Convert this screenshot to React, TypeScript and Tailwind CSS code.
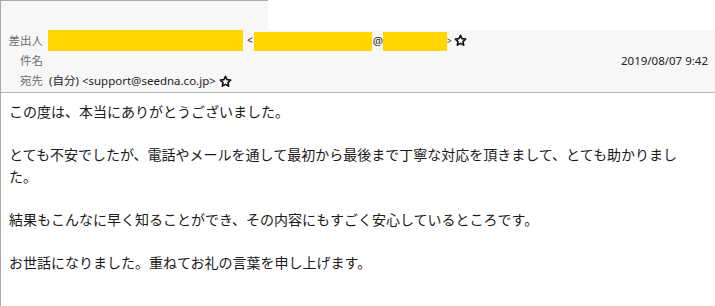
import React from 'react';

const StarIcon: React.FC = () => (
  <svg width="13" height="13" viewBox="0 0 24 24" fill="none" stroke="#111" strokeWidth={3} strokeLinejoin="round">
    <path d="M12 2.5l2.9 6.1 6.6.8-4.9 4.6 1.3 6.6L12 17.3l-5.9 3.3 1.3-6.6-4.9-4.6 6.6-.8z" />
  </svg>
);

const headerFont = { fontFamily: '"Noto Sans", "Noto Sans CJK JP", sans-serif' };

const App: React.FC = () => {
  const paragraphs = [
    'この度は、本当にありがとうございました。',
    'とても不安でしたが、電話やメールを通して最初から最後まで丁寧な対応を頂きまして、とても助かりました。',
    '結果もこんなに早く知ることができ、その内容にもすごく安心しているところです。',
    'お世話になりました。重ねてお礼の言葉を申し上げます。',
  ];

  return (
    <div className="w-[715px] h-[306px] bg-white border-l border-[#a8a8a8] overflow-hidden">
      {/* top strip */}
      <div className="flex h-[30px]">
        <div className="w-[267px] bg-[#f7f7f7] border-t border-[#a9aab8]" />
        <div className="flex-1 bg-white" />
      </div>

      {/* header */}
      <div className="bg-[#f7f7f7] border-b border-[#b4b4b4] pb-px text-[11.5px] text-[#222]" style={headerFont}>
        <div className="flex items-center h-[21px]">
          <div className="w-[42px] text-right text-[#6b6b6b] shrink-0">差出人</div>
          <div className="ml-[5px] w-[195px] h-[21px] bg-[#ffd600]" />
          <span className="ml-[4px] text-[10px]">&lt;</span>
          <div className="ml-[1px] w-[118px] h-[19px] bg-[#ffd600] self-end" />
          <span className="ml-[1px]">@</span>
          <div className="w-[64px] h-[19px] bg-[#ffd600] self-end" />
          <span className="text-[8px]">&gt;</span>
          <span className="ml-[2px] flex"><StarIcon /></span>
        </div>
        <div className="flex items-center h-[20px]">
          <div className="w-[42px] text-right text-[#6b6b6b] shrink-0">件名</div>
          <div className="flex-1" />
          <div className="pr-[7px]">2019/08/07 9:42</div>
        </div>
        <div className="flex items-center h-[20px]">
          <div className="w-[42px] text-right text-[#6b6b6b] shrink-0">宛先</div>
          <div className="ml-[6px]">(自分) &lt;support@seedna.co.jp&gt;</div>
          <span className="ml-[3px] flex"><StarIcon /></span>
        </div>
      </div>

      {/* body */}
      <div
        className="pl-[8px] pr-[25px] pt-[8px] text-[14px] leading-[21.5px] text-[#1a1a1a]"
        style={{ fontFamily: '"Noto Sans CJK JP", sans-serif' }}
      >
        {paragraphs.map((p, i) => (
          <p key={i} className="mb-[21.5px]">{p}</p>
        ))}
      </div>
    </div>
  );
};

export default App;
